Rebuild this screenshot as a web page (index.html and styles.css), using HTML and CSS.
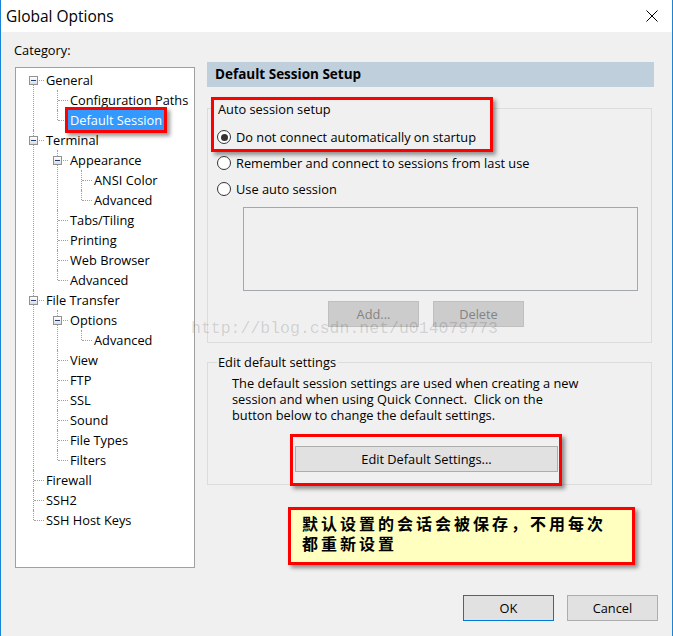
FILE: index.html
```html
<!DOCTYPE html>
<html lang="en">
<head>
    <meta charset="UTF-8">
    <title>Global Options</title>
    <link rel="stylesheet" href="styles.css">
</head>
<body>
<div class="window">
    <div class="titlebar">
        <span class="title">Global Options</span>
        <svg class="close" width="12" height="12" viewBox="0 0 12 12">
            <path d="M0.5 0.5L11.5 11.5M11.5 0.5L0.5 11.5" stroke="#000" stroke-width="1" fill="none"/>
        </svg>
    </div>
    <div class="dialog">
        <div class="main">
            <!-- category tree -->
            <div class="category">
                <div class="cat-label">Category:</div>
                <div class="tree-box">
                    <ul class="tree">
                        <li><span class="toggle"></span><span class="node">General</span>
                            <ul>
                                <li><span class="node">Configuration Paths</span></li>
                                <li><span class="node selected">Default Session</span></li>
                            </ul>
                        </li>
                        <li><span class="toggle"></span><span class="node">Terminal</span>
                            <ul>
                                <li><span class="toggle"></span><span class="node">Appearance</span>
                                    <ul>
                                        <li><span class="node">ANSI Color</span></li>
                                        <li><span class="node">Advanced</span></li>
                                    </ul>
                                </li>
                                <li><span class="node">Tabs/Tiling</span></li>
                                <li><span class="node">Printing</span></li>
                                <li><span class="node">Web Browser</span></li>
                                <li><span class="node">Advanced</span></li>
                            </ul>
                        </li>
                        <li><span class="toggle"></span><span class="node">File Transfer</span>
                            <ul>
                                <li><span class="toggle"></span><span class="node">Options</span>
                                    <ul>
                                        <li><span class="node">Advanced</span></li>
                                    </ul>
                                </li>
                                <li><span class="node">View</span></li>
                                <li><span class="node">FTP</span></li>
                                <li><span class="node">SSL</span></li>
                                <li><span class="node">Sound</span></li>
                                <li><span class="node">File Types</span></li>
                                <li><span class="node">Filters</span></li>
                            </ul>
                        </li>
                        <li><span class="node">Firewall</span></li>
                        <li><span class="node">SSH2</span></li>
                        <li><span class="node">SSH Host Keys</span></li>
                    </ul>
                </div>
            </div>

            <!-- settings panel -->
            <div class="panel">
                <div class="panel-head">Default Session Setup</div>

                <div class="group group-auto">
                    <div class="callout callout-auto">
                        <div class="group-label">Auto session setup</div>
                        <div class="radio-row"><span class="radio checked"></span>Do not connect automatically on startup</div>
                    </div>
                    <div class="radio-row"><span class="radio"></span>Remember and connect to sessions from last use</div>
                    <div class="radio-row"><span class="radio"></span>Use auto session</div>
                    <div class="listbox"></div>
                    <div class="list-buttons">
                        <button class="btn" disabled>Add...</button>
                        <button class="btn" disabled>Delete</button>
                    </div>
                </div>

                <div class="group group-edit">
                    <div class="group-label">Edit default settings</div>
                    <p class="group-text">The default session settings are used when creating a new<br>session and when using Quick Connect.&nbsp; Click on the<br>button below to change the default settings.</p>
                    <div class="callout callout-edit">
                        <button class="btn btn-wide">Edit Default Settings...</button>
                    </div>
                </div>

                <div class="note">默认设置的会话会被保存，不用每次<br>都重新设置</div>
            </div>
        </div>

        <div class="footer">
            <button class="btn btn-default">OK</button>
            <button class="btn">Cancel</button>
        </div>

        <div class="watermark">http://blog.csdn.net/u014079773</div>
    </div>
</div>
</body>
</html>
```

FILE: styles.css
```css
body {
    margin: 0;
    font-family: "Open Sans", "Noto Sans", sans-serif;
    font-size: 12.8px;
    color: #000;
    background: #fff;
}
.window {
    width: 673px;
    height: 636px;
    box-sizing: border-box;
    border-left: 1px solid #1883d7;
    border-right: 1px solid #1883d7;
    background: #f0f0f0;
    overflow: hidden;
}
.titlebar {
    height: 32px;
    background: #fff;
    display: flex;
    align-items: center;
    justify-content: space-between;
    padding: 0 14px 0 5px;
}
.title {
    font-size: 15.5px;
}
.dialog {
    position: relative;
    height: 604px;
}
.main {
    display: flex;
    padding-left: 13px;
}

/* category tree */
.category {
    width: 181px;
}
.cat-label {
    margin-top: 10px;
    line-height: 16px;
}
.tree-box {
    margin: 9px 0 0 1px;
    width: 180px;
    height: 501px;
    box-sizing: border-box;
    border: 1px solid #a0a0a0;
    background: #fff;
}
.tree, .tree ul {
    list-style: none;
    margin: 0;
    padding: 0;
}
.tree {
    padding: 2px 0 0 17px;
}
.tree ul {
    margin-left: 11px;
}
.tree li {
    position: relative;
    padding-left: 13px;
}
.tree li::before {
    content: '';
    position: absolute;
    left: 0;
    top: 0;
    bottom: 0;
    border-left: 1px dotted #a0a0a0;
}
.tree li:last-child::before {
    bottom: auto;
    height: 10px;
}
.tree > li:first-child::before {
    top: 10px;
}
.tree li::after {
    content: '';
    position: absolute;
    left: 1px;
    top: 10px;
    width: 10px;
    border-top: 1px dotted #a0a0a0;
}
.node {
    display: inline-block;
    height: 20px;
    line-height: 20px;
    white-space: nowrap;
}
.node.selected {
    position: relative;
    z-index: 2;
    background: #3399ff;
    color: #fff;
    padding: 0 2px;
    margin-left: -2px;
    box-shadow: 0 0 0 3px #ff0000, 3px 3px 4px 3px rgba(0, 0, 0, 0.4);
}
.toggle {
    position: absolute;
    left: -4px;
    top: 6px;
    width: 9px;
    height: 9px;
    box-sizing: border-box;
    border: 1px solid #919191;
    background: linear-gradient(#ffffff, #dcdcdc);
    z-index: 1;
}
.toggle::after {
    content: '';
    position: absolute;
    left: 1px;
    top: 3px;
    width: 5px;
    height: 1px;
    background: #1c3d7a;
}

/* right panel */
.panel {
    margin: 30px 0 0 12px;
    width: 447px;
}
.panel-head {
    height: 25px;
    line-height: 25px;
    background: #c0cfdc;
    font-weight: 700;
    font-size: 13.5px;
    padding-left: 8px;
}
.group {
    width: 445px;
    box-sizing: border-box;
    border: 1px solid #dcdcdc;
    padding: 0 9px;
}
.group-label {
    display: table;
    line-height: 16px;
    padding: 0 2px 0 1px;
    background: #f0f0f0;
}
.group-auto {
    margin-top: 21px;
    padding-bottom: 15px;
}
.callout {
    box-sizing: border-box;
    border: 3px solid #ff0000;
    background: #f0f0f0;
    box-shadow: 3px 3px 4px rgba(0, 0, 0, 0.4);
}
.callout-auto {
    width: 282px;
    margin: -12px 0 0 -6px;
    padding: 1px 0 2px 3px;
}
.callout-auto .group-label {
    margin-bottom: 10px;
    background: none;
}
.radio-row {
    display: flex;
    align-items: center;
    height: 20px;
    white-space: nowrap;
}
.callout + .radio-row {
    margin-top: 1px;
}
.radio-row + .radio-row {
    margin-top: 6px;
}
.radio {
    width: 14px;
    height: 14px;
    box-sizing: border-box;
    border: 1px solid #333;
    border-radius: 50%;
    background: #fff;
    margin-right: 5px;
    display: flex;
    align-items: center;
    justify-content: center;
}
.radio.checked::after {
    content: '';
    width: 7px;
    height: 7px;
    border-radius: 50%;
    background: #333;
}
.listbox {
    margin: 8px 0 0 26px;
    width: 395px;
    height: 84px;
    box-sizing: border-box;
    border: 1px solid #a4a8ae;
}
.list-buttons {
    display: flex;
    gap: 14px;
    margin: 10px 0 0 111px;
}
.btn {
    width: 91px;
    height: 26px;
    box-sizing: border-box;
    border: 1px solid #adadad;
    background: #e1e1e1;
    font: inherit;
    color: #000;
    padding: 0;
}
.btn:disabled {
    background: #cccccc;
    border-color: #bfbfbf;
    color: #838383;
}
.group-edit {
    margin-top: 19px;
    padding-bottom: 0;
}
.group-edit .group-label {
    margin-top: -9px;
}
.group-text {
    margin: 5px 0 0 15px;
    line-height: 16px;
}
.callout-edit {
    width: 272px;
    margin: 11px 0 -2px 73px;
    padding: 9px 0 11px 2px;
}
.btn-wide {
    display: block;
    width: 263px;
}
.note {
    margin: 22px 0 0 81px;
    width: 347px;
    height: 58px;
    box-sizing: border-box;
    border: 3px solid #ff0000;
    background: #ffffc0;
    box-shadow: 3px 3px 4px rgba(0, 0, 0, 0.4);
    padding: 3px 0 0 11px;
    font-family: "Noto Sans CJK SC", sans-serif;
    font-weight: 700;
    font-size: 16px;
    line-height: 20px;
    letter-spacing: 3px;
}

/* bottom buttons */
.footer {
    display: flex;
    justify-content: flex-end;
    gap: 13px;
    padding-right: 14px;
    margin-top: 27px;
}
.btn-default {
    border-color: #0078d7;
}
.watermark {
    position: absolute;
    left: 190px;
    top: 287px;
    font-family: "Liberation Mono", monospace;
    font-size: 16.5px;
    line-height: 20px;
    color: rgba(0, 0, 0, 0.15);
    pointer-events: none;
}
```
